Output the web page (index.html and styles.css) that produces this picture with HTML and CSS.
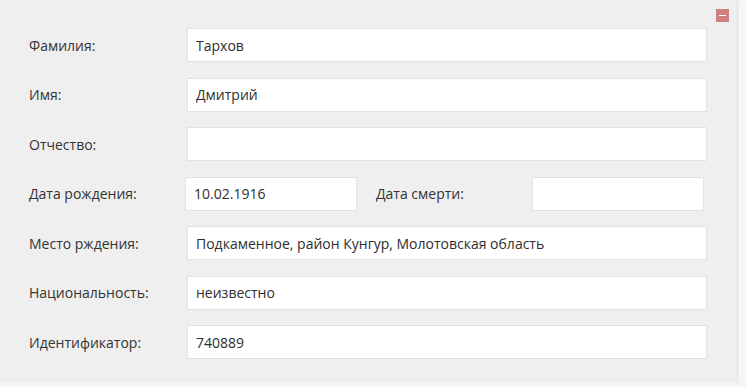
FILE: index.html
```html
<!DOCTYPE html>
<html lang="ru">
<head>
    <meta charset="UTF-8">
    <meta name="viewport" content="width=device-width, initial-scale=1.0">
    <title>Персона</title>
    <link rel="stylesheet" href="styles.css">
</head>
<body>
    <div class="panel">
        <span class="collapse" title="Свернуть"></span>
        <form class="person-form">
            <div class="row">
                <label for="surname">Фамилия:</label>
                <input type="text" id="surname" value="Тархов">
            </div>
            <div class="row">
                <label for="name">Имя:</label>
                <input type="text" id="name" value="Дмитрий">
            </div>
            <div class="row">
                <label for="patronymic">Отчество:</label>
                <input type="text" id="patronymic" value="">
            </div>
            <div class="row dates">
                <label for="birth">Дата рождения:</label>
                <input type="text" id="birth" class="date" value="10.02.1916">
                <label for="death" class="death-label">Дата смерти:</label>
                <input type="text" id="death" class="date" value="">
            </div>
            <div class="row">
                <label for="place">Место рждения:</label>
                <input type="text" id="place" value="Подкаменное, район Кунгур, Молотовская область">
            </div>
            <div class="row">
                <label for="nation">Национальность:</label>
                <input type="text" id="nation" value="неизвестно">
            </div>
            <div class="row">
                <label for="ident">Идентификатор:</label>
                <input type="text" id="ident" value="740889">
            </div>
        </form>
    </div>
</body>
</html>
```

FILE: styles.css
```css
body {
    margin: 0;
    padding: 0;
    background-color: #f6f6f6;
    font-family: "Open Sans", Arial, sans-serif;
    font-size: 14px;
    color: #333;
}
.panel {
    position: relative;
    width: 737px;
    height: 383px;
    box-sizing: border-box;
    background-color: #efefef;
    box-shadow: 1px 1px 1px rgba(0, 0, 0, 0.08);
    padding: 28px 30px 0 29px;
}
.collapse {
    position: absolute;
    top: 9px;
    left: 716px;
    width: 13px;
    height: 13px;
    background-color: #cd8181;
    cursor: pointer;
}
.collapse::after {
    content: "";
    position: absolute;
    left: 3px;
    top: 6px;
    width: 7px;
    height: 1px;
    background-color: #fff;
}
.person-form {
    display: flex;
    flex-direction: column;
    gap: 15.5px;
}
.row {
    display: flex;
    align-items: center;
    height: 34px;
}
.row label {
    width: 158px;
    flex: none;
}
.row input {
    flex: 1;
    height: 34px;
    box-sizing: border-box;
    border: 1px solid #e2e2e2;
    background: #fff;
    padding: 0 8px;
    font-family: inherit;
    font-size: 14px;
    color: #2e2e2e;
    outline: none;
}
.dates label:first-child {
    width: 156px;
}
.dates input.date {
    flex: none;
    width: 172px;
}
.dates .death-label {
    width: 156px;
    margin-left: 19px;
}
```
